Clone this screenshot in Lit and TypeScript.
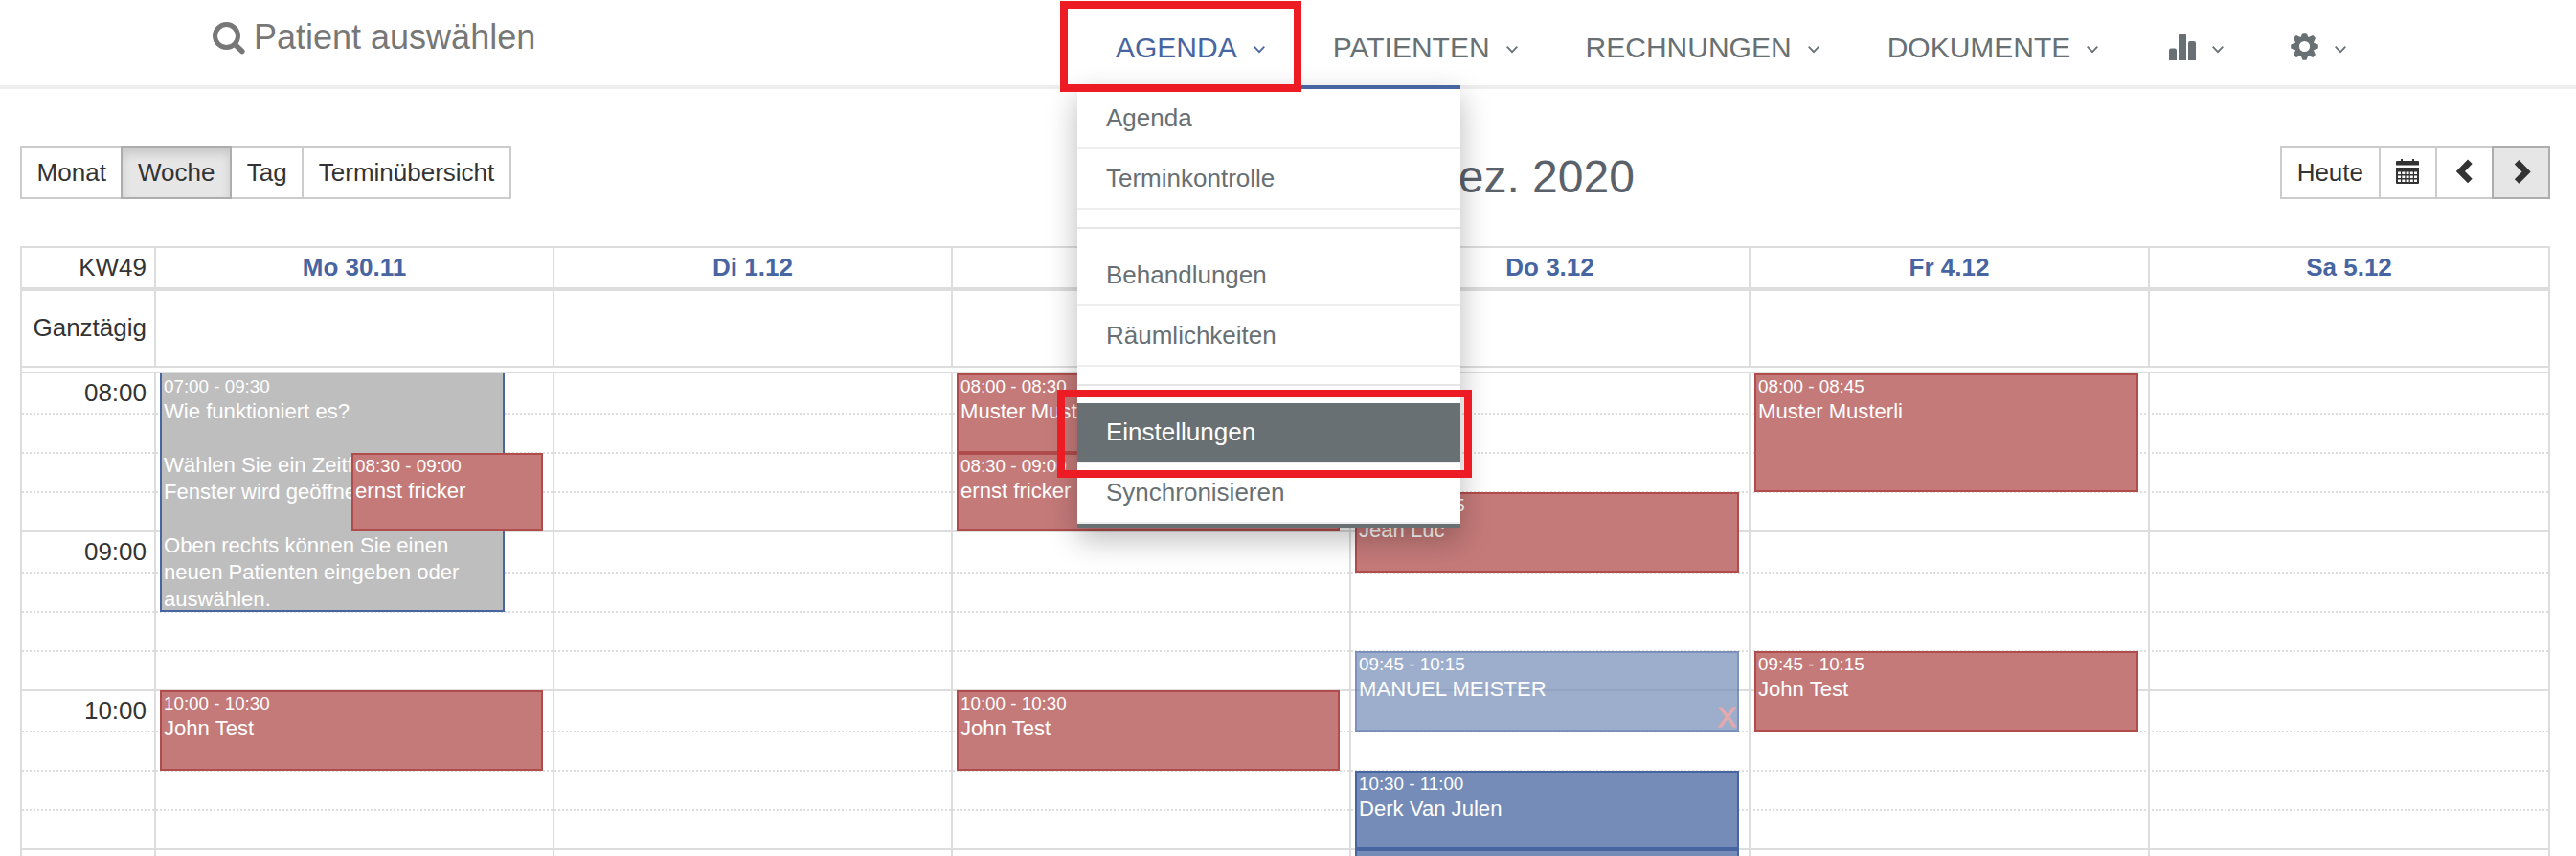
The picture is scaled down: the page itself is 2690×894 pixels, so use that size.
import { LitElement, html, css, svg, nothing } from 'lit';
import { customElement, property } from 'lit/decorators.js';
import { classMap } from 'lit/directives/class-map.js';
import { styleMap } from 'lit/directives/style-map.js';

interface CalendarEvent {
  day: number;
  start: string;
  end: string;
  title: string;
  color: 'red' | 'blue' | 'gray';
  // share of the column left free on either side
  left?: number;
  right?: number;
  cancelled?: boolean;
}

const FIRST_HOUR = 8;
const LAST_HOUR = 12;
const COLUMN_SPACE = 400;

const DAYS = ['Mo 30.11', 'Di 1.12', 'Mi 2.12', 'Do 3.12', 'Fr 4.12', 'Sa 5.12'];

const HELP_TEXT = `Wie funktioniert es?

Wählen Sie ein Zeitfenster. Ein
Fenster wird geöffnet.

Oben rechts können Sie einen
neuen Patienten eingeben oder
auswählen.`;

const EVENTS: CalendarEvent[] = [
  { day: 0, start: '07:00', end: '09:30', title: HELP_TEXT, color: 'gray', right: 0.1 },
  { day: 0, start: '08:30', end: '09:00', title: 'ernst fricker', color: 'red', left: 0.5 },
  { day: 0, start: '10:00', end: '10:30', title: 'John Test', color: 'red' },
  { day: 2, start: '08:00', end: '08:30', title: 'Muster Musterli', color: 'red' },
  { day: 2, start: '08:30', end: '09:00', title: 'ernst fricker', color: 'red' },
  { day: 2, start: '10:00', end: '10:30', title: 'John Test', color: 'red' },
  { day: 3, start: '08:45', end: '09:15', title: 'Jean Luc', color: 'red' },
  { day: 3, start: '09:45', end: '10:15', title: 'MANUEL MEISTER', color: 'blue', cancelled: true },
  { day: 3, start: '10:30', end: '11:00', title: 'Derk Van Julen', color: 'blue' },
  { day: 3, start: '11:00', end: '11:30', title: '', color: 'blue' },
  { day: 4, start: '08:00', end: '08:45', title: 'Muster Musterli', color: 'red' },
  { day: 4, start: '09:45', end: '10:15', title: 'John Test', color: 'red' },
];

const chevron = svg`<svg class="chevron" width="12" height="8" viewBox="0 0 12 8">
  <path d="M0.7 0.7 6 6.2 11.3 0.7" fill="none" stroke="currentColor" stroke-width="1.7" />
</svg>`;

const icons = {
  search: html`<svg width="34" height="34" viewBox="0 0 34 34" fill="none" stroke="currentColor">
    <circle cx="14.5" cy="14.6" r="12" stroke-width="5" />
    <path d="M23.4 23.4 30.8 30.6" stroke-width="5.6" stroke-linecap="round" />
  </svg>`,
  chart: html`<svg width="28" height="28" viewBox="0 0 28 28" fill="currentColor">
    <path d="M0 28V17.5q0-2 2-2h4q2 0 2 2V28z" />
    <path d="M10 28V2q0-2 2-2h4q2 0 2 2V28z" />
    <path d="M20 28V10q0-2 2-2h4q2 0 2 2V28z" />
  </svg>`,
  gear: html`<svg width="29" height="29" viewBox="-14.5 -14.5 29 29" fill="currentColor">
    <circle r="8" fill="none" stroke="currentColor" stroke-width="4.8" />
    ${[0, 45, 90, 135, 180, 225, 270, 315].map(
      (angle) => svg`<path transform="rotate(${angle})" d="M-4-9-2.3-13.6q.2-.7.8-.7h3q.6 0 .8.7L4-9z" />`
    )}
  </svg>`,
  calendar: html`<svg width="24" height="26" viewBox="0 0 24 26" fill="currentColor">
    <path d="M0 6.5V3q0-1 1-1h4V0h2v2h10V0h2v2h4q1 0 1 1v3.5z" />
    <path fill-rule="evenodd" d="M0 9h24v16q0 1-1 1H1q-1 0-1-1z
      M2 13.5h3v2.5h-3z M6.3 13.5h3v2.5h-3z M10.6 13.5h3v2.5h-3z M14.8 13.5h3v2.5h-3z M19 13.5h3v2.5h-3z
      M2 17.5h3v2.5h-3z M6.3 17.5h3v2.5h-3z M10.6 17.5h3v2.5h-3z M14.8 17.5h3v2.5h-3z M19 17.5h3v2.5h-3z
      M2 21.5h3v2.5h-3z M6.3 21.5h3v2.5h-3z M10.6 21.5h3v2.5h-3z M14.8 21.5h3v2.5h-3z M19 21.5h3v2.5h-3z" />
  </svg>`,
  prev: html`<svg width="26" height="26" viewBox="0 0 26 26" fill="currentColor">
    <path d="M17 .5 21.7 5 14 12.9 21.7 20.8 17 25.3 4.8 12.9z" />
  </svg>`,
  next: html`<svg width="26" height="26" viewBox="0 0 26 26" fill="currentColor">
    <path d="M11.5 1 6.8 5.5 14.5 13.4 6.8 21.3 11.5 25.8 23.7 13.4z" />
  </svg>`,
};

@customElement('agenda-nav')
export class AgendaNav extends LitElement {
  // --- render ---

  render() {
    return html`
      <header class="bar">
        <div class="search">${icons.search}<span>Patient auswählen</span></div>
        <nav class="nav">
          <a class="item active">AGENDA ${chevron}</a>
          <a class="item">PATIENTEN ${chevron}</a>
          <a class="item">RECHNUNGEN ${chevron}</a>
          <a class="item">DOKUMENTE ${chevron}</a>
          <a class="item icon">${icons.chart} ${chevron}</a>
          <a class="item icon gear">${icons.gear} ${chevron}</a>
        </nav>
      </header>
      <div class="menu">
        <a class="entry">Agenda</a>
        <a class="entry">Terminkontrolle</a>
        <div class="divider"></div>
        <a class="entry">Behandlungen</a>
        <a class="entry">Räumlichkeiten</a>
        <div class="divider"></div>
        <a class="entry selected">Einstellungen</a>
        <a class="entry">Synchronisieren</a>
      </div>
      <div class="marker marker-nav"></div>
      <div class="marker marker-entry"></div>
    `;
  }

  // --- styles ---

  static styles = css`
    :host {
      display: block;
      position: relative;
      z-index: 10;
    }

    .bar {
      align-items: flex-start;
      border-bottom: 4px solid #eee;
      box-sizing: border-box;
      display: flex;
      height: 93px;
    }

    .search {
      box-sizing: border-box;
      color: #777;
      display: flex;
      flex: 0 0 1165px;
      font-size: 36px;
      gap: 9px;
      line-height: 40px;
      padding: 19px 0 0 222px;
    }

    .search svg {
      margin-top: 4px;
    }

    .nav {
      color: #687073;
      display: flex;
      font-size: 30px;
      gap: 71px;
      line-height: 34px;
      padding-top: 33px;
    }

    .item {
      display: flex;
      gap: 17px;
    }

    .item.icon {
      margin-left: 3px;
    }

    .item.active {
      color: #4765a0;
    }

    .item.icon svg:first-child {
      margin-top: 2px;
    }

    .item.gear {
      margin-left: -1px;
    }

    .item.gear svg:first-child {
      margin-top: 0.5px;
    }

    .item .chevron {
      margin-top: 15px;
    }

    .menu {
      background: #fff;
      border-bottom: 4px solid #687073;
      border-top: 4px solid #4765a0;
      box-shadow: 0 12px 30px rgba(0, 0, 0, 0.27);
      left: 1125px;
      position: absolute;
      top: 89px;
      width: 400px;
    }

    .entry {
      border-bottom: 2px solid #eee;
      color: #687073;
      display: block;
      font-size: 26px;
      height: 61px;
      line-height: 60px;
      padding-left: 30px;
    }

    .entry.selected {
      background: #687073;
      background-clip: padding-box;
      color: #fff;
    }

    .divider {
      background: #e5e5e5;
      height: 2px;
      margin: 18px 0;
    }

    .marker {
      border: 8px solid #ed1c24;
      box-sizing: border-box;
      position: absolute;
    }

    .marker-nav {
      height: 95px;
      left: 1107px;
      top: 1px;
      width: 252px;
    }

    .marker-entry {
      height: 92px;
      left: 1104px;
      top: 407px;
      width: 433px;
    }
  `;
}

@customElement('agenda-toolbar')
export class AgendaToolbar extends LitElement {
  // --- render ---

  render() {
    return html`
      <div class="group">
        <button>Monat</button>
        <button class="pressed">Woche</button>
        <button>Tag</button>
        <button>Terminübersicht</button>
      </div>
      <h2 class="title">30. Nov. – 5. Dez. 2020</h2>
      <div class="group">
        <button>Heute</button>
        <button>${icons.calendar}</button>
        <button>${icons.prev}</button>
        <button class="hovered">${icons.next}</button>
      </div>
    `;
  }

  // --- styles ---

  static styles = css`
    :host {
      display: flex;
      height: 55px;
      justify-content: space-between;
      padding: 60px 27px 49px 21px;
    }

    .group {
      display: flex;
    }

    button {
      background: #fff;
      border: 2px solid #ccc;
      box-sizing: border-box;
      color: #333;
      font: inherit;
      font-size: 26px;
      height: 55px;
      line-height: 49px;
      margin: 0 0 0 -2px;
      min-width: 61px;
      padding: 0 0.6em 1px;
    }

    button:first-child {
      margin-left: 0;
    }

    button svg {
      display: block;
      margin: -3px auto 0;
    }

    .pressed,
    .hovered {
      background: #e6e6e6;
      border-color: #adadad;
      position: relative;
    }

    .pressed {
      box-shadow: inset 0 6px 10px rgba(0, 0, 0, 0.125);
    }

    .title {
      color: #5a616b;
      font-size: 48px;
      font-weight: normal;
      line-height: 55px;
      margin: 0;
      padding: 4px 2px 0 0;
    }
  `;
}

@customElement('agenda-week')
export class AgendaWeek extends LitElement {
  @property({ attribute: false }) events: CalendarEvent[] = [];

  // --- helpers ---

  private _row(time: string) {
    const [hours, minutes] = time.split(':').map(Number);
    return Math.max(1, (hours - FIRST_HOUR) * 4 + minutes / 15 + 1);
  }

  // --- render ---

  private _renderSlots() {
    const count = (LAST_HOUR - FIRST_HOUR) * 4;
    return Array.from({ length: count }, (_, i) => {
      const hour = i % 4 === 0;
      const first = i === 0;
      const label = `${FIRST_HOUR + i / 4}`.padStart(2, '0') + ':00';
      const row = styleMap({ gridRow: `${i + 1}` });
      return html`
        <div class=${classMap({ slot: true, hour, first })} style=${row}></div>
        ${hour ? html`<div class=${classMap({ label: true, first })} style=${row}>${label}</div>` : nothing}
      `;
    });
  }

  private _renderEvent(event: CalendarEvent) {
    const clipped = event.start < `0${FIRST_HOUR}:00`;
    const classes = { event: true, [event.color]: true, clipped, cancelled: !!event.cancelled };
    const styles = {
      gridColumn: `${event.day + 2}`,
      gridRow: `${this._row(event.start)} / ${this._row(event.end)}`,
      marginLeft: `${4 + (event.left ?? 0) * COLUMN_SPACE}px`,
      marginRight: `${12 + (event.right ?? 0) * COLUMN_SPACE}px`,
    };
    return html`
      <div class=${classMap(classes)} style=${styleMap(styles)}>
        <div class="time">${event.start} - ${event.end}</div>
        <div class="name">${event.title}</div>
        ${event.cancelled ? html`<span class="cross">X</span>` : nothing}
      </div>
    `;
  }

  render() {
    return html`
      <div class="table">
        <div class="row head">
          <div class="cell axis">KW49</div>
          ${DAYS.map((day) => html`<div class="cell day">${day}</div>`)}
        </div>
        <div class="row all-day">
          <div class="cell axis">Ganztägig</div>
          ${DAYS.map(() => html`<div class="cell"></div>`)}
        </div>
        <div class="gap"></div>
        <div class="row grid">
          ${this._renderSlots()}
          ${DAYS.map((_, i) => html`<div class="line" style=${styleMap({ gridColumn: `${i + 1}` })}></div>`)}
          ${this.events.map((event) => this._renderEvent(event))}
        </div>
      </div>
    `;
  }

  // --- styles ---

  static styles = css`
    :host {
      color: #333;
      display: block;
      font-size: 26px;
      padding: 0 27px 0 21px;
    }

    .table {
      border: 2px solid #ddd;
      border-bottom: 0;
    }

    .row {
      display: grid;
      grid-template-columns: 140px 416px 416px 416px 417px 417px 1fr;
    }

    .cell {
      border-right: 2px solid #ddd;
    }

    .cell:last-child {
      border-right: 0;
    }

    .axis,
    .label {
      padding-right: 8px;
      text-align: right;
    }

    .head {
      border-bottom: 4px solid #ddd;
      height: 41px;
      line-height: 40px;
    }

    .day {
      color: #4765a0;
      font-weight: bold;
      text-align: center;
    }

    .all-day {
      border-bottom: 2px solid #ddd;
      height: 78px;
      line-height: 76px;
    }

    .gap {
      border-bottom: 2px solid #ddd;
      height: 4px;
    }

    .grid {
      grid-template-rows:
        42px 41px 41px 41px
        43px 41px 41px 41px
        43px 41px 41px 41px
        43px 41px 41px 41px;
    }

    .slot {
      background: repeating-linear-gradient(90deg, #ddd 0 2px, transparent 2px 4px);
      grid-column: 1 / -1;
      height: 2px;
      margin-top: -1px;
    }

    .slot.hour {
      background: #ddd;
    }

    .slot.first {
      background: none;
    }

    .label {
      grid-column: 1;
      line-height: 43px;
      margin-right: 2px;
    }

    .label.first {
      line-height: 41px;
    }

    .line {
      border-right: 2px solid #ddd;
      grid-row: 1 / -1;
    }

    .event {
      border: 2px solid;
      box-sizing: border-box;
      color: #fff;
      overflow: hidden;
      padding: 0 2px;
      position: relative;
    }

    .red {
      background: #c47a79;
      border-color: #b04d4c;
    }

    .blue {
      background: #758cb8;
      border-color: #4765a0;
    }

    .gray {
      background: #bebebe;
      border-color: #4765a0;
    }

    .clipped {
      border-top: 0;
      padding-top: 2px;
    }

    .cancelled {
      opacity: 0.7;
    }

    .time {
      font-size: 18.8px;
      height: 24px;
      line-height: 23px;
      white-space: nowrap;
    }

    .name {
      font-size: 22.1px;
      line-height: 28px;
      white-space: pre;
    }

    .cross {
      -webkit-text-stroke: 1px #da8589;
      bottom: -1px;
      color: #da8589;
      font-size: 29px;
      line-height: 28px;
      position: absolute;
      right: 1px;
    }
  `;
}

@customElement('app-root')
export class AppRoot extends LitElement {
  // --- render ---

  render() {
    return html`
      <agenda-nav></agenda-nav>
      <agenda-toolbar></agenda-toolbar>
      <agenda-week .events=${EVENTS}></agenda-week>
    `;
  }

  // --- styles ---

  static styles = css`
    :host {
      background: #fff;
      display: block;
      font-family: 'Liberation Sans', Arial, sans-serif;
      height: 894px;
      overflow: hidden;
      width: 2690px;
    }
  `;
}
